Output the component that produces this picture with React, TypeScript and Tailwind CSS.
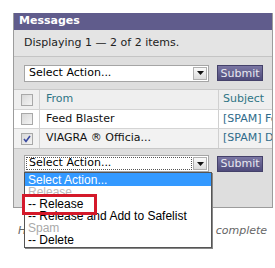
import React from "react";

const font = { fontFamily: '"DejaVu Sans", Verdana, sans-serif' };
const listFont = { fontFamily: '"Liberation Sans", Arial, sans-serif' };

const Checkbox = ({ checked = false }: { checked?: boolean }) => (
  <div className="flex h-[12px] w-[12px] items-center justify-center border border-[#a8a8a8] bg-gradient-to-br from-[#d8d8d8] to-[#f4f4f4]">
    {checked && (
      <svg width="8" height="8" viewBox="0 0 8 8">
        <path d="M1 4 L3 6.5 L7 1" fill="none" stroke="#3a4aa0" strokeWidth="1.6" />
      </svg>
    )}
  </div>
);

const SelectBox = ({ focused = false }: { focused?: boolean }) => (
  <div className="flex h-[17px] w-[185px] items-center border border-[#a5a5a5] bg-white">
    <div
      className={`flex h-full flex-1 items-center pl-[4px] text-[11px] text-black ${
        focused ? "outline-1 outline-dotted outline-[#555] -outline-offset-2" : ""
      }`}
    >
      Select Action...
    </div>
    <div className="mr-[1px] flex h-[13px] w-[14px] items-center justify-center border border-[#b0b0b0] bg-gradient-to-b from-[#fafafa] to-[#dcdcdc]">
      <svg width="7" height="4" viewBox="0 0 7 4">
        <path d="M0 0 H7 L3.5 4 Z" fill="#111" />
      </svg>
    </div>
  </div>
);

const SubmitButton = () => (
  <button className="h-[16px] w-[46px] border border-[#44416a] bg-gradient-to-b from-[#7a76a3] to-[#4f4b7b] text-[11px] leading-none text-[#e8e8f0]">
    Submit
  </button>
);

export default function App() {
  return (
    <div className="relative h-[268px] w-[275px] overflow-hidden bg-white pl-[13px] pt-[13px]" style={font}>
      <div className="w-[260px] border-l border-r border-[#9c9c9c] bg-[#dedede]">
        <div className="flex h-[17px] items-center bg-[#605c8c] pl-[5px] text-[11px] font-bold text-white">
          Messages
        </div>
        <div className="flex h-[27px] items-center border-b border-[#c4c4c4] bg-[#e4e4e4] pl-[10px] text-[11px] text-[#222]">
          Displaying 1 — 2 of 2 items.
        </div>
        <div className="flex h-[32px] items-center gap-[8px] pl-[10px]">
          <SelectBox />
          <SubmitButton />
        </div>
        <div className="border-t border-[#c8c8c8] text-[11px]">
          <div className="flex h-[20px] border-b border-[#d4d4d4] bg-[#efefef]">
            <div className="flex w-[26px] items-center justify-center border-r border-[#d0d0d0]">
              <Checkbox />
            </div>
            <div className="flex w-[179px] items-center border-r border-[#d0d0d0] pl-[6px] text-[#2f7585]">From</div>
            <div className="flex flex-1 items-center pl-[4px] text-[#2f7585]">Subject</div>
          </div>
          <div className="flex h-[19px] border-b border-[#d4d4d4] bg-white">
            <div className="flex w-[26px] items-center justify-center border-r border-[#d0d0d0]">
              <Checkbox />
            </div>
            <div className="flex w-[179px] items-center border-r border-[#d0d0d0] pl-[6px] text-[#111]">Feed Blaster</div>
            <div className="flex flex-1 items-center overflow-hidden whitespace-nowrap pl-[4px] text-[#2f6b8a]">[SPAM] Feed</div>
          </div>
          <div className="flex h-[20px] border-b border-[#c8c8c8] bg-[#f2f2f2]">
            <div className="flex w-[26px] items-center justify-center border-r border-[#d0d0d0]">
              <Checkbox checked />
            </div>
            <div className="flex w-[179px] items-center border-r border-[#d0d0d0] pl-[6px] text-[#111]">VIAGRA ® Officia...</div>
            <div className="flex flex-1 items-center overflow-hidden whitespace-nowrap pl-[4px] text-[#2f6b8a]">[SPAM] Dis</div>
          </div>
        </div>
        <div className="h-[59px] border-b border-[#9c9c9c] pl-[10px] pt-[6px]">
          <div className="flex items-center gap-[8px]">
            <SelectBox focused />
            <SubmitButton />
          </div>
        </div>
      </div>
      <p className="mt-[15px] whitespace-nowrap pl-[5px] text-[11px] italic text-[#666]">
        Hover over the message to see the complete
      </p>

      {/* open select list */}
      <div
        className="absolute left-[24px] top-[172px] w-[188px] border border-[#555] bg-white text-[12px] leading-[12px] shadow-[1px_1px_0_#888]"
        style={listFont}
      >
        <div className="bg-[#3399ff] py-[0.5px] pl-[3px] text-white">Select Action...</div>
        <div className="pl-[3px] text-[#bbb]">Release</div>
        <div className="pl-[3px] text-black">-- Release</div>
        <div className="pl-[3px] text-black">-- Release and Add to Safelist</div>
        <div className="pl-[3px] text-[#aaa]">Spam</div>
        <div className="pb-[1px] pl-[3px] text-black">-- Delete</div>
      </div>
      <div className="absolute left-[22px] top-[194px] h-[21px] w-[75px] border-[3px] border-[#d4192a]" />
    </div>
  );
}
